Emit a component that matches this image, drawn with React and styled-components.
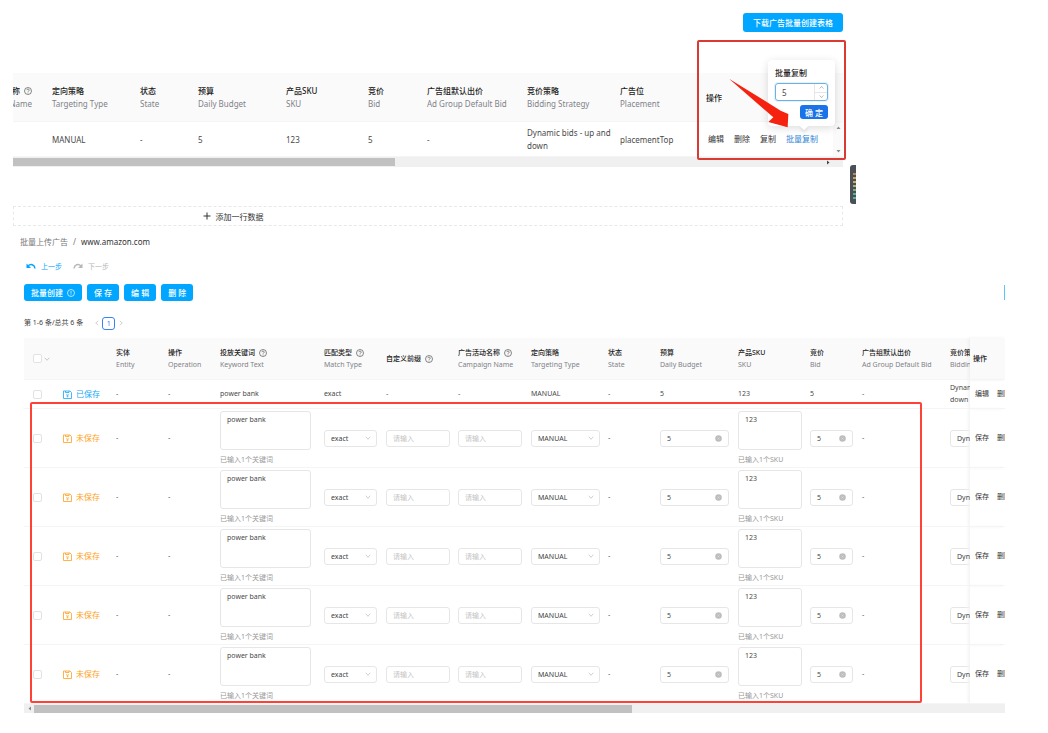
import { useState } from "react";
import styled, { createGlobalStyle } from "styled-components";

const GlobalStyle = createGlobalStyle`
  * {
    box-sizing: border-box;
  }
  body {
    margin: 0;
    background: #fff;
    color: #4a4a4a;
    font-family: "Noto Sans", "Noto Sans CJK SC", sans-serif;
    font-size: 8px;
  }
  button, input, select, textarea {
    font-family: inherit;
    color: inherit;
    margin: 0;
  }
`;

const Page = styled.main`
  overflow: hidden;
`;

const TopPanel = styled.section`
  position: relative;
  margin: 0 205px 0 13px;
  padding-top: 13px;
`;

const BottomPanel = styled.section`
  margin: 8px 43px 0 24px;
`;

const Bar = styled.div`
  display: flex;
  align-items: center;
  justify-content: ${(p) => (p.$end ? "flex-end" : "flex-start")};
  gap: ${(p) => p.$gap || 0}px;
  margin-bottom: ${(p) => p.$after || 0}px;
`;

const Button = styled.button`
  display: flex;
  align-items: center;
  justify-content: center;
  gap: 4px;
  height: ${(p) => p.$height || 17}px;
  padding: 0 ${(p) => p.$pad || 7}px;
  border: none;
  border-radius: 3px;
  background: ${(p) => p.$color || "#00a6ff"};
  color: #fff;
  font-size: 8px;
  font-weight: 500;
  white-space: pre;
  cursor: pointer;
`;

const EdgeButton = styled.button`
  width: 1px;
  height: 15px;
  margin-left: auto;
  padding: 0;
  border: none;
  background: #5cc4ff;
`;

const Table = styled.table`
  width: 100%;
  table-layout: fixed;
  border-collapse: separate;
  border-spacing: 0;
`;

const Th = styled.th`
  height: ${(p) => p.$height}px;
  padding: 0 0 0 5px;
  background: #fafafa;
  border-bottom: 1px solid #f5f5f5;
  text-align: left;
  vertical-align: middle;
  font-weight: 400;
  overflow: hidden;
`;

const Td = styled.td`
  height: ${(p) => p.$height}px;
  padding: ${(p) => p.$pad || "0 0 0 5px"};
  border-bottom: 1px solid #f5f5f5;
  vertical-align: middle;
  overflow: hidden;
  font-size: ${(p) => p.$size || 7}px;
  line-height: ${(p) => (p.$size === 8 ? 13 : 12)}px;
  white-space: ${(p) => (p.$nowrap ? "nowrap" : "normal")};
`;

const StickyTh = styled(Th)`
  padding-left: ${(p) => (p.$shadow ? 3 : 5)}px;
  box-shadow: ${(p) => (p.$shadow ? "-2px 0 3px #f0f0f0" : "none")};
`;

const StickyTd = styled(Td)`
  box-shadow: ${(p) => (p.$shadow ? "-2px 0 3px #f3f3f3" : "none")};
`;

const Heading = styled.div`
  display: flex;
  flex-direction: column;
  align-items: ${(p) => (p.$clipStart ? "flex-end" : "flex-start")};
  padding-right: ${(p) => (p.$clipStart ? 15 : 0)}px;
  font-size: ${(p) => p.$size}px;
  line-height: ${(p) => (p.$size === 8 ? 13 : 12)}px;
  white-space: nowrap;
`;

const HeadingName = styled.span`
  display: flex;
  align-items: center;
  gap: 4px;
  color: #222;
  font-weight: 500;
`;

const HeadingSub = styled.span`
  color: #7f8288;
`;

const Actions = styled.div`
  display: flex;
  align-items: center;
  gap: ${(p) => p.$gap}px;
  white-space: nowrap;
`;

const Link = styled.a`
  color: ${(p) => (p.$active ? "#2f86d6" : "#333")};
  font-size: ${(p) => p.$size || 7}px;
  text-decoration: none;
`;

const RowScroll = styled.span`
  display: flex;
  flex-direction: column;
  justify-content: space-between;
  align-items: center;
  width: 10px;
  height: 34px;
  padding: 3px 0 2px;
  margin-left: auto;
  background: #fafafa;
`;

const Track = styled.div`
  display: flex;
  align-items: center;
  height: ${(p) => p.$height}px;
  background: #f0f0f0;
`;

const TrackStart = styled.span`
  display: flex;
  justify-content: center;
  width: 10px;
`;

const Thumb = styled.div`
  width: ${(p) => p.$width};
  height: 8px;
  background: #c1c1c1;
`;

const TrackEnd = styled.span`
  display: flex;
  align-items: center;
  justify-content: flex-start;
  width: 17px;
  margin-left: auto;
`;

const AddRow = styled.button`
  display: flex;
  align-items: center;
  justify-content: center;
  gap: 5px;
  width: 100%;
  height: 20px;
  margin-top: 39px;
  padding: 0 390px 0 0;
  border: 1px dashed #e8e8e8;
  background: #fff;
  color: #333;
  font-size: 8px;
`;

const Highlight = styled.div`
  position: absolute;
  border: 2px solid ${(p) => p.$color};
  border-radius: 2px;
  pointer-events: none;
`;

const TopHighlight = styled(Highlight)`
  top: 40px;
  right: -3px;
  width: 149px;
  height: 120px;
`;

const RowsHighlight = styled(Highlight)`
  top: 64px;
  left: 6px;
  right: 83px;
  bottom: 10px;
`;

const Popover = styled.div`
  position: absolute;
  top: 60px;
  right: 8px;
  width: 67px;
  display: flex;
  flex-direction: column;
  align-items: flex-end;
  gap: 4px;
  padding: 7px;
  border-radius: 4px;
  background: #fff;
  box-shadow: 0 2px 8px rgba(0, 0, 0, 0.14);
  &::after {
    content: "";
    position: absolute;
    bottom: -3px;
    left: 33px;
    width: 6px;
    height: 6px;
    background: #fff;
    transform: rotate(45deg);
    box-shadow: 2px 2px 3px rgba(0, 0, 0, 0.08);
  }
`;

const PopoverTitle = styled.label`
  align-self: flex-start;
  color: #222;
  font-size: 8px;
  font-weight: 500;
  line-height: 12px;
`;

const Stepper = styled.div`
  display: flex;
  width: 100%;
  height: 18px;
  border: 1px solid #6fb0df;
  border-radius: 3px;
  box-shadow: 0 0 0 1px #e3f2fc;
`;

const StepperButtons = styled.div`
  display: flex;
  flex-direction: column;
  width: 13px;
  border-left: 1px solid #e6e6e6;
`;

const StepButton = styled.button`
  flex: 1;
  display: flex;
  align-items: center;
  justify-content: center;
  padding: 0;
  border: none;
  background: none;
  color: #999;
  & + & {
    border-top: 1px solid #e6e6e6;
  }
`;

const BareInput = styled.input`
  flex: 1;
  min-width: 0;
  padding: 0 0 0 6px;
  border: none;
  outline: none;
  background: transparent;
  color: #4a4a4a;
  font-size: ${(p) => p.$size || 7}px;
`;

const ArrowSvg = styled.svg`
  position: absolute;
  top: 78px;
  right: 52px;
  pointer-events: none;
`;

const GaugeSvg = styled.svg`
  position: absolute;
  top: 165px;
  right: -13px;
`;

const Crumbs = styled.nav`
  display: flex;
  gap: 5px;
  margin: 0 0 8px -4px;
  line-height: 16px;
  color: #777;
`;

const CrumbLink = styled.a`
  color: ${(p) => (p.$current ? "#333" : "#777")};
  text-decoration: none;
`;

const HistoryButton = styled.button`
  display: flex;
  align-items: center;
  gap: 5px;
  height: 16px;
  padding: 0 2px;
  border: none;
  background: none;
  color: #00a6ff;
  font-size: 7px;
  &:disabled {
    color: #b8b8b8;
  }
`;

const PageButton = styled.button`
  display: flex;
  align-items: center;
  justify-content: center;
  width: ${(p) => (p.$current ? 13 : 7)}px;
  height: 13px;
  padding: 0;
  border: ${(p) => (p.$current ? "1px solid #3b82f6" : "none")};
  border-radius: 3px;
  background: #fff;
  color: ${(p) => (p.$current ? "#2f7bf5" : "#c4c4c4")};
  font-size: 7px;
`;

const PageInfo = styled.span`
  margin-right: 8px;
  color: #444;
  font-size: 7px;
  line-height: 16px;
`;

const TableWrap = styled.div`
  position: relative;
`;

const Checkbox = styled.input`
  appearance: none;
  display: block;
  width: 9px;
  height: 9px;
  border: 1px solid #e2e2e2;
  border-radius: 2px;
  background: #fff;
  &:checked {
    background: #00a6ff;
  }
`;

const CheckGroup = styled.div`
  display: flex;
  align-items: center;
  gap: 2px;
  padding-left: 4px;
  color: #bbb;
`;

const Status = styled.span`
  display: flex;
  align-items: center;
  gap: 4px;
  color: ${(p) => (p.$saved ? "#14a8fb" : "#ff9f1c")};
  font-size: 8px;
  white-space: nowrap;
`;

const Field = styled.div`
  display: flex;
  align-items: center;
  width: 100%;
  height: 17px;
  padding-right: 5px;
  border: 1px solid #e6e6e6;
  border-radius: 3px;
  background: #fff;
  color: #c2c2c2;
`;

const StrategyField = styled(Field)`
  width: 92px;
`;

const Select = styled.select`
  flex: 1;
  min-width: 0;
  appearance: none;
  height: 15px;
  padding: 0 0 0 6px;
  border: none;
  outline: none;
  background: transparent;
  color: #444;
  font-size: 7px;
`;

const TextInput = styled.input`
  display: block;
  width: 100%;
  height: 17px;
  padding: 0 6px;
  border: 1px solid #e6e6e6;
  border-radius: 3px;
  font-size: 7px;
  &::placeholder {
    color: #c4c4c4;
  }
`;

const TextArea = styled.textarea`
  display: block;
  width: 100%;
  height: 39px;
  padding: 2px 6px;
  border: 1px solid #e6e6e6;
  border-radius: 3px;
  resize: none;
  overflow: hidden;
  font-size: 7px;
  line-height: 12px;
`;

const Hint = styled.div`
  margin-top: 2px;
  color: #999;
  font-size: 7px;
  line-height: 15px;
  white-space: nowrap;
`;

const ClearButton = styled.button`
  display: flex;
  margin-right: 1px;
  padding: 0;
  border: none;
  background: none;
`;

const HelpIcon = () => (
  <svg width="8" height="8" viewBox="0 0 16 16" fill="none" stroke="#555" strokeWidth="1.4">
    <circle cx="8" cy="8" r="7" />
    <path d="M5.8 6.3a2.2 2.2 0 1 1 3.2 2c-.7.4-1 .8-1 1.5M8 11.2v1.4" />
  </svg>
);

const InfoIcon = () => (
  <svg width="8" height="8" viewBox="0 0 16 16" fill="none" stroke="#fff" strokeWidth="1.4">
    <circle cx="8" cy="8" r="7" />
    <path d="M8 4v5.4M8 10.8v1.6" />
  </svg>
);

const Chevron = ({ size = 6, turn = 0 }) => (
  <svg width={size} height={size} viewBox="0 0 12 12" fill="none" stroke="currentColor" strokeWidth="1.6">
    <path d="M1.5 3.5 6 8.5l4.5-5" transform={`rotate(${turn} 6 6)`} />
  </svg>
);

const Triangle = ({ turn = 0, color = "#8a8a8a" }) => (
  <svg width="5" height="5" viewBox="0 0 10 10" fill={color}>
    <path d="M1 8h8L5 3z" transform={`rotate(${turn} 5 5)`} />
  </svg>
);

const UndoIcon = ({ flip }) => (
  <svg width="10" height="8" viewBox="0 0 20 16" fill="none" stroke="currentColor" strokeWidth="3">
    <g transform={flip ? "translate(20 0) scale(-1 1)" : undefined}>
      <path d="M4 8c5-5 13-3 14 5" />
      <path d="M1 3v9h9z" fill="currentColor" stroke="none" />
    </g>
  </svg>
);

const SaveIcon = () => (
  <svg width="9" height="9" viewBox="0 0 18 18" fill="none" stroke="currentColor" strokeWidth="1.6">
    <path d="M1 2h13l3 3v12H1z" />
    <path d="M5 2v3h7V2" />
    <path d="M6.500 8 9 10.500 11.500 8M9 10.500V15M6.500 12h5" strokeWidth="1.200" />
  </svg>
);

const ClearIcon = () => (
  <svg width="7" height="7" viewBox="0 0 14 14">
    <circle cx="7" cy="7" r="6.5" fill="#bdbdbd" />
    <path d="M5 5l4 4M9 5l-4 4" stroke="#dedede" strokeWidth="1.3" />
  </svg>
);

const GAUGE_COLORS = ["#b88a5a", "#c9a05c", "#c8b066", "#a9b56c", "#7fae78", "#5fae92", "#52b3a8"];

const Gauge = () => (
  <GaugeSvg width="6" height="39" viewBox="0 0 6 39">
    <path d="M3 0h3v39H3a3 3 0 0 1-3-3V3a3 3 0 0 1 3-3z" fill="#4a5055" />
    {GAUGE_COLORS.map((color, i) => (
      <rect key={color} x="3" y={8 + i * 4} width="3" height="2" fill={color} />
    ))}
  </GaugeSvg>
);

const topColumns = [
  { name: "广告活动名称", sub: "Campaign Name", help: true, width: 34, clipStart: true, value: "" },
  { name: "定向策略", sub: "Targeting Type", width: 88, value: "MANUAL" },
  { name: "状态", sub: "State", width: 58, value: "-" },
  { name: "预算", sub: "Daily Budget", width: 88, value: "5" },
  { name: "产品SKU", sub: "SKU", width: 82, value: "123" },
  { name: "竞价", sub: "Bid", width: 59, value: "5" },
  { name: "广告组默认出价", sub: "Ad Group Default Bid", width: 100, value: "-" },
  { name: "竞价策略", sub: "Bidding Strategy", width: 93, value: "Dynamic bids - up and down" },
  { name: "广告位", sub: "Placement", width: 86, value: "placementTop" },
];

const columns = [
  { name: "实体", sub: "Entity", width: 52, saved: "-" },
  { name: "操作", sub: "Operation", width: 52, saved: "-" },
  { name: "投放关键词", sub: "Keyword Text", help: true, width: 104, saved: "power bank" },
  { name: "匹配类型", sub: "Match Type", help: true, width: 62, saved: "exact" },
  { name: "自定义前缀", help: true, width: 72, saved: "-" },
  { name: "广告活动名称", sub: "Campaign Name", help: true, width: 73, saved: "-" },
  { name: "定向策略", sub: "Targeting Type", width: 77, saved: "MANUAL" },
  { name: "状态", sub: "State", width: 52, saved: "-" },
  { name: "预算", sub: "Daily Budget", width: 78, saved: "5" },
  { name: "产品SKU", sub: "SKU", width: 72, saved: "123" },
  { name: "竞价", sub: "Bid", width: 52, saved: "5" },
  { name: "广告组默认出价", sub: "Ad Group Default Bid", width: 88, saved: "-" },
  { name: "竞价策略", sub: "Bidding Strategy", width: 25, saved: "Dynamic down" },
];

const ColumnHeading = ({ column, size }) => (
  <Heading $size={size} $clipStart={column.clipStart}>
    <HeadingName>
      {column.name}
      {column.help && <HelpIcon />}
    </HeadingName>
    {column.sub && <HeadingSub>{column.sub}</HeadingSub>}
  </Heading>
);

const ClearableInput = ({ label, initial }) => {
  const [value, setValue] = useState(initial);
  return (
    <Field>
      <BareInput aria-label={label} value={value} onChange={(e) => setValue(e.target.value)} />
      <ClearButton aria-label={`清除${label}`} onClick={() => setValue("")}>
        <ClearIcon />
      </ClearButton>
    </Field>
  );
};

const SelectBox = ({ label, options }) => (
  <Field>
    <Select aria-label={label}>
      {options.map((option) => (
        <option key={option}>{option}</option>
      ))}
    </Select>
    <Chevron />
  </Field>
);

const DraftRow = () => (
  <tr>
    <Td $height={59}>
      <CheckGroup>
        <Checkbox type="checkbox" aria-label="选择" />
      </CheckGroup>
    </Td>
    <Td>
      <Status>
        <SaveIcon />
        未保存
      </Status>
    </Td>
    <Td>-</Td>
    <Td>-</Td>
    <Td $pad="1px 8px 0 5px">
      <TextArea aria-label="投放关键词" defaultValue="power bank" />
      <Hint>已输入1个关键词</Hint>
    </Td>
    <Td $pad="0 4px 0 5px">
      <SelectBox label="匹配类型" options={["exact", "phrase", "broad"]} />
    </Td>
    <Td $pad="0 3px 0 5px">
      <TextInput aria-label="自定义前缀" placeholder="请输入" />
    </Td>
    <Td $pad="0 4px 0 5px">
      <TextInput aria-label="广告活动名称" placeholder="请输入" />
    </Td>
    <Td $pad="0 3px 0 5px">
      <SelectBox label="定向策略" options={["MANUAL", "AUTO"]} />
    </Td>
    <Td>-</Td>
    <Td $pad="0 4px 0 5px">
      <ClearableInput label="预算" initial="5" />
    </Td>
    <Td $pad="1px 3px 0 5px">
      <TextArea aria-label="产品SKU" defaultValue="123" />
      <Hint>已输入1个SKU</Hint>
    </Td>
    <Td $pad="0 4px 0 5px">
      <ClearableInput label="竞价" initial="5" />
    </Td>
    <Td>-</Td>
    <Td>
      <StrategyField>
        <Select aria-label="竞价策略">
          <option>Dynamic bids - up and down</option>
        </Select>
      </StrategyField>
    </Td>
    <StickyTd $shadow>
      <Actions $gap={8}>
        <Link href="#save">保存</Link>
        <Link href="#delete">删除</Link>
      </Actions>
    </StickyTd>
  </tr>
);

const CopyPopover = () => {
  const [count, setCount] = useState(5);
  return (
    <Popover>
      <PopoverTitle htmlFor="copy-count">批量复制</PopoverTitle>
      <Stepper>
        <BareInput
          id="copy-count"
          $size={8}
          value={count}
          onChange={(e) => setCount(Number(e.target.value) || 0)}
        />
        <StepperButtons>
          <StepButton aria-label="增加" onClick={() => setCount(count + 1)}>
            <Chevron size={5} turn={180} />
          </StepButton>
          <StepButton aria-label="减少" onClick={() => setCount(count - 1)}>
            <Chevron size={5} />
          </StepButton>
        </StepperButtons>
      </Stepper>
      <Button $height={14} $pad={5} $color="#1a73e8">
        确 定
      </Button>
    </Popover>
  );
};

const CopyExample = () => (
  <TopPanel>
    <Bar $end $after={41}>
      <Button $height={19} $pad={10}>
        下载广告批量创建表格
      </Button>
    </Bar>
    <Table>
      <colgroup>
        {topColumns.map((c) => (
          <col key={c.sub} width={c.width} />
        ))}
        <col width="142" />
      </colgroup>
      <thead>
        <tr>
          {topColumns.map((c) => (
            <Th key={c.sub} $height={49}>
              <ColumnHeading column={c} size={8} />
            </Th>
          ))}
          <StickyTh>
            <ColumnHeading column={{ name: "操作" }} size={8} />
          </StickyTh>
        </tr>
      </thead>
      <tbody>
        <tr>
          {topColumns.map((c) => (
            <Td key={c.sub} $height={35} $size={8}>
              {c.value}
            </Td>
          ))}
          <StickyTd $pad="0 0 0 7px">
            <Actions $gap={10}>
              <Link $size={8} href="#edit">编辑</Link>
              <Link $size={8} href="#delete">删除</Link>
              <Link $size={8} href="#copy">复制</Link>
              <Link $size={8} $active href="#batch-copy">批量复制</Link>
              <RowScroll>
                <Triangle />
                <Triangle turn={180} />
              </RowScroll>
            </Actions>
          </StickyTd>
        </tr>
      </tbody>
    </Table>
    <Track $height={10}>
      <Thumb $width="46%" />
      <TrackEnd>
        <Triangle turn={90} color="#444" />
      </TrackEnd>
    </Track>
    <AddRow>
      <svg width="8" height="8" viewBox="0 0 8 8" stroke="#333">
        <path d="M4 0.5v7M0.5 4h7" />
      </svg>
      添加一行数据
    </AddRow>
    <CopyPopover />
    <TopHighlight $color="#d93a32" />
    <ArrowSvg width="62" height="50" viewBox="0 0 186 150">
      <path d="M0 2 155 98 178 108 176 148 118 132 133 118z" fill="#f5220f" />
    </ArrowSvg>
    <Gauge />
  </TopPanel>
);

const App = () => {
  return (
    <Page>
      <GlobalStyle />
      <CopyExample />
      <BottomPanel>
        <Crumbs>
          <CrumbLink href="#upload">批量上传广告</CrumbLink>
          <span>/</span>
          <CrumbLink $current href="#site">www.amazon.com</CrumbLink>
        </Crumbs>
        <Bar $gap={7} $after={10}>
          <HistoryButton>
            <UndoIcon />
            上一步
          </HistoryButton>
          <HistoryButton disabled>
            <UndoIcon flip />
            下一步
          </HistoryButton>
        </Bar>
        <Bar $gap={5} $after={14}>
          <Button>
            批量创建
            <InfoIcon />
          </Button>
          <Button>保 存</Button>
          <Button>编 辑</Button>
          <Button>删 除</Button>
          <EdgeButton aria-label="更多" />
        </Bar>
        <Bar $gap={2} $after={7}>
          <PageInfo>第 1-6 条/总共 6 条</PageInfo>
          <PageButton aria-label="上一页">
            <Chevron turn={90} />
          </PageButton>
          <PageButton $current>1</PageButton>
          <PageButton aria-label="下一页">
            <Chevron turn={-90} />
          </PageButton>
        </Bar>
        <TableWrap>
          <Table>
            <colgroup>
              <col width="34" />
              <col width="53" />
              {columns.map((c) => (
                <col key={c.name} width={c.width} />
              ))}
              <col width="35" />
            </colgroup>
            <thead>
              <tr>
                <Th $height={42}>
                  <CheckGroup>
                    <Checkbox type="checkbox" aria-label="全选" />
                    <Chevron />
                  </CheckGroup>
                </Th>
                <Th />
                {columns.map((c) => (
                  <Th key={c.name}>
                    <ColumnHeading column={c} size={7} />
                  </Th>
                ))}
                <StickyTh $shadow>
                  <ColumnHeading column={{ name: "操作" }} size={7} />
                </StickyTh>
              </tr>
            </thead>
            <tbody>
              <tr>
                <Td $height={29}>
                  <CheckGroup>
                    <Checkbox type="checkbox" aria-label="选择" />
                  </CheckGroup>
                </Td>
                <Td>
                  <Status $saved>
                    <SaveIcon />
                    已保存
                  </Status>
                </Td>
                {columns.map((c) => (
                  <Td key={c.name} $nowrap={c.width > 25}>
                    {c.saved}
                  </Td>
                ))}
                <StickyTd $shadow>
                  <Actions $gap={8}>
                    <Link href="#edit">编辑</Link>
                    <Link href="#delete">删除</Link>
                  </Actions>
                </StickyTd>
              </tr>
              {[1, 2, 3, 4, 5].map((row) => (
                <DraftRow key={row} />
              ))}
            </tbody>
          </Table>
          <Track $height={9}>
            <TrackStart>
              <Triangle turn={-90} />
            </TrackStart>
            <Thumb $width="61%" />
          </Track>
          <RowsHighlight $color="#ff4136" />
        </TableWrap>
      </BottomPanel>
    </Page>
  );
};

export default App;
